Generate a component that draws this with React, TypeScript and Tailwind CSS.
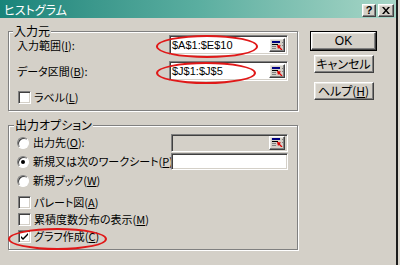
import type { ReactNode } from "react";

const sunken =
  "border border-t-[#808080] border-l-[#808080] border-b-white border-r-white shadow-[inset_1px_1px_0_#404040,inset_-1px_-1px_0_#d4d0c8]";
const raised =
  "border border-t-white border-l-white border-b-[#404040] border-r-[#404040] shadow-[inset_-1px_-1px_0_#808080,inset_1px_1px_0_#e8e6e0]";

function U({ c }: { c: string }) {
  return <span className="underline underline-offset-[1px] decoration-[1px]">{c}</span>;
}

function RefButton() {
  return (
    <div className={`${raised} w-[16px] h-[14px] bg-[#d4d0c8] flex items-center justify-center shrink-0`}>
      <svg width="11" height="9" viewBox="0 0 11 9">
        <rect x="0" y="0" width="8" height="2" fill="#000080" />
        <rect x="0" y="3" width="6" height="1" fill="#000" />
        <rect x="0" y="5" width="4" height="1" fill="#808080" />
        <rect x="0" y="7" width="4" height="1" fill="#808080" />
        <polygon points="5,4 9,4.5 6,8" fill="#e00000" />
        <line x1="7" y1="6" x2="10" y2="9" stroke="#e00000" strokeWidth="1.3" />
        <rect x="10" y="1" width="1" height="1" fill="#808080" />
        <rect x="10" y="4" width="1" height="1" fill="#808080" />
      </svg>
    </div>
  );
}

function Field({ value, w, disabled }: { value?: string; w: string; disabled?: boolean }) {
  return (
    <div
      className={`${sunken} ${w} h-full flex items-center justify-between pl-[2px] pr-[2px] shrink-0 ${
        disabled ? "bg-[#d4d0c8]" : "bg-white"
      }`}
    >
      <span className="font-['Liberation_Sans',sans-serif] text-[11px] leading-none">{value}</span>
      {value !== undefined || disabled ? <RefButton /> : null}
    </div>
  );
}

function Check({ checked }: { checked?: boolean }) {
  return (
    <span className={`${sunken} w-[13px] h-[13px] bg-white flex items-center justify-center shrink-0`}>
      {checked && (
        <svg width="7" height="7" viewBox="0 0 7 7">
          <path d="M0 3 L2 5 L7 0 L7 2 L2 7 L0 5 Z" fill="#000" />
        </svg>
      )}
    </span>
  );
}

function Radio({ checked }: { checked?: boolean }) {
  return (
    <span className="w-[12px] h-[12px] rounded-full bg-white border border-t-[#808080] border-l-[#808080] border-b-white border-r-white shadow-[inset_1px_1px_0_#404040] flex items-center justify-center shrink-0">
      {checked && <span className="w-[4px] h-[4px] rounded-full bg-black" />}
    </span>
  );
}

function Group({ title, left, className, children }: { title: string; left: string; className: string; children: ReactNode }) {
  return (
    <div className={`relative border border-[#808080] shadow-[1px_1px_0_#fff,inset_1px_1px_0_#fff] ${className}`}>
      <span className={`absolute -top-[7px] ${left} bg-[#d4d0c8] px-[1px] text-[12px] leading-[12px]`}>{title}</span>
      {children}
    </div>
  );
}

function Btn({ children, def, w }: { children: ReactNode; def?: boolean; w: string }) {
  const face = (
    <div className={`${raised} h-full w-full bg-[#d4d0c8] flex items-center justify-center text-[12px] leading-none`}>
      {children}
    </div>
  );
  return def ? <div className={`border border-black ${w} h-[20px]`}>{face}</div> : <div className={`${w} h-[18px]`}>{face}</div>;
}

export default function App() {
  return (
    <div className="relative w-[400px] h-[265px] overflow-hidden bg-[#dcd8d0] text-black font-['Noto_Sans_CJK_JP',sans-serif] [font-feature-settings:'palt'] text-[11px]">
      <div className="w-[398px] h-full bg-[#d4d0c8] border-r-2 border-r-[#1c1c1c] flex flex-col">
        {/* title bar */}
        <div className="h-[18px] shrink-0 flex items-end bg-linear-to-r from-[#17847a] via-[#5aaea0] to-[#a7d6c7] pl-[4px] pr-[2px]">
          <span className="text-white text-[12px] leading-[14px] pb-[1px]">ヒストグラム</span>
          <div className="ml-auto flex gap-[2px] pb-[1px]">
            <div className={`${raised} w-[14px] h-[13px] bg-[#d4d0c8] flex items-center justify-center text-[11px] font-bold leading-none font-['Liberation_Sans',sans-serif]`}>
              ?
            </div>
            <div className={`${raised} w-[16px] h-[13px] bg-[#d4d0c8] flex items-center justify-center`}>
              <svg width="8" height="7" viewBox="0 0 8 7">
                <path d="M0 0 L2 0 L4 2.5 L6 0 L8 0 L5 3.5 L8 7 L6 7 L4 4.5 L2 7 L0 7 L3 3.5 Z" fill="#000" />
              </svg>
            </div>
          </div>
        </div>

        <div className="flex pl-[8px] pt-[13px]">
          <div className="w-[290px] flex flex-col">
            <Group title="入力元" left="left-[4px]" className="h-[80px] pt-[3px] pl-[8px] pr-[9px]">
              <div className="h-[20px] flex items-center justify-between">
                <span className="leading-[13px]">
                  入力範囲(<U c="I" />):
                </span>
                <Field value="$A$1:$E$10" w="w-[119px]" />
              </div>
              <div className="h-[20px] mt-[6px] flex items-center justify-between">
                <span>
                  データ区間(<U c="B" />):
                </span>
                <Field value="$J$1:$J$5" w="w-[119px]" />
              </div>
              <div className="h-[13px] mt-[10px] flex items-center gap-[3px] pl-[1px]">
                <Check />
                <span>
                  ラベル(<U c="L" />)
                </span>
              </div>
            </Group>

            <Group title="出力オプション" left="left-[5px]" className="mt-[14px] h-[125px] pt-[7px] pl-[8px] pr-[9px]">
              <div className="h-[19px] py-[0.5px] flex items-center">
                <Radio />
                <span className="ml-[4px] flex-1 min-w-0 whitespace-nowrap overflow-hidden">
                  出力先(<U c="O" />):
                </span>
                <Field w="w-[117px]" disabled />
              </div>
              <div className="h-[19px] py-[1px] flex items-center">
                <Radio checked />
                <span className="ml-[4px] flex-1 min-w-0 whitespace-nowrap overflow-hidden">
                  新規又は次のワークシート(<U c="P" />)
                </span>
                <Field w="w-[117px]" />
              </div>
              <div className="h-[19px] flex items-center">
                <Radio />
                <span className="ml-[4px]">
                  新規ブック(<U c="W" />)
                </span>
              </div>
              <div className="mt-[4px] h-[17px] flex items-center gap-[3px] pl-[1px]">
                <Check />
                <span>
                  パレート図(<U c="A" />)
                </span>
              </div>
              <div className="h-[17px] flex items-center gap-[3px] pl-[1px]">
                <Check />
                <span>
                  累積度数分布の表示(<U c="M" />)
                </span>
              </div>
              <div className="h-[17px] flex items-center gap-[3px] pl-[1px]">
                <Check checked />
                <span>
                  グラフ作成(<U c="C" />)
                </span>
              </div>
            </Group>
          </div>

          <div className="ml-[12px] w-[67px] flex flex-col items-center">
            <Btn def w="w-[67px]">
              <span className="font-['Liberation_Sans',sans-serif]">OK</span>
            </Btn>
            <div className="mt-[4px]">
              <Btn w="w-[60px]">キャンセル</Btn>
            </div>
            <div className="mt-[9px]">
              <Btn w="w-[60px]">
                ヘルプ(<U c="H" />)
              </Btn>
            </div>
          </div>
        </div>
      </div>

      {/* red annotation ellipses */}
      <span className="absolute left-[156px] top-[35px] w-[102px] h-[23px] rounded-[50%] border-2 border-[#e01818] pointer-events-none" />
      <span className="absolute left-[156px] top-[62px] w-[100px] h-[22px] rounded-[50%] border-2 border-[#e01818] pointer-events-none" />
      <span className="absolute left-[8px] top-[228px] w-[99px] h-[22px] rounded-[50%] border-2 border-[#e01818] pointer-events-none" />
    </div>
  );
}
